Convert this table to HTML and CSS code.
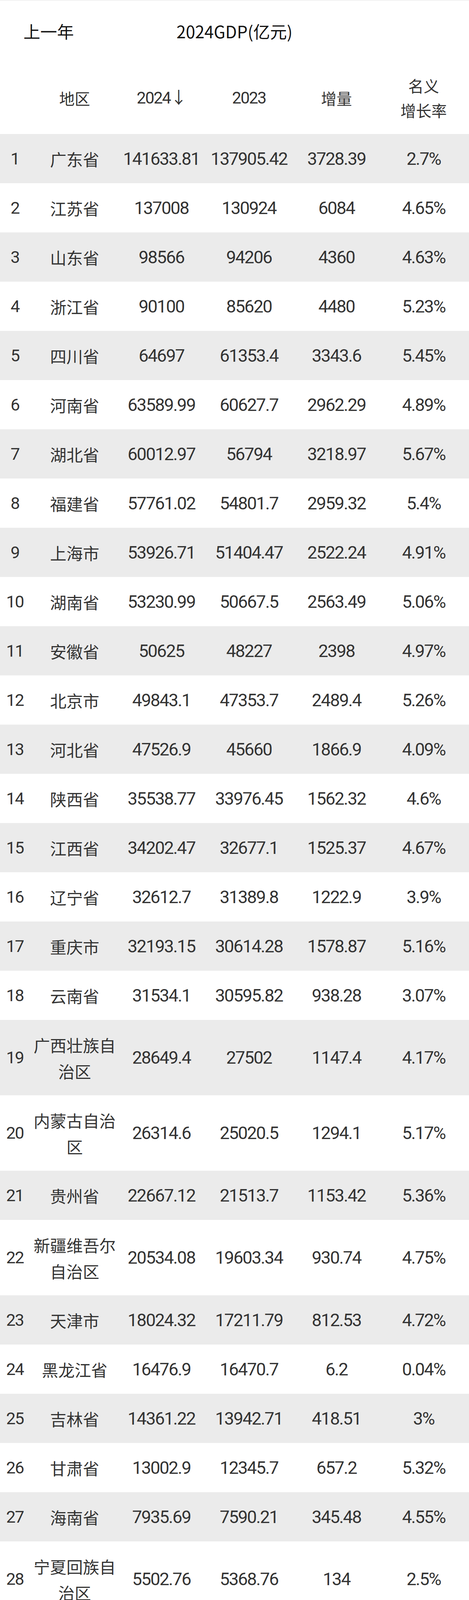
FILE: index.html
```html
<!DOCTYPE html>
<html lang="zh-CN">
<head>
<meta charset="utf-8">
<title>2024GDP(亿元)</title>
<link rel="stylesheet" href="styles.css">
</head>
<body>
<div class="page">
  <div class="titlebar">
    <span class="prev">上一年</span>
    <span class="title">2024GDP(亿元)</span>
    <span class="spacer"></span>
  </div>
  <table class="gdp">
    <colgroup>
      <col class="c-rank"><col class="c-region"><col class="c-a"><col class="c-b"><col class="c-c"><col class="c-d">
    </colgroup>
    <thead>
      <tr>
        <th></th>
        <th class="cjk">地区</th>
        <th class="num">2024↓</th>
        <th class="num">2023</th>
        <th class="cjk">增量</th>
        <th class="cjk">名义<br>增长率</th>
      </tr>
    </thead>
    <tbody>
      <tr><td class="rank">1</td><td class="cjk">广东省</td><td class="num">141633.81</td><td class="num">137905.42</td><td class="num">3728.39</td><td class="num">2.7%</td></tr>
      <tr><td class="rank">2</td><td class="cjk">江苏省</td><td class="num">137008</td><td class="num">130924</td><td class="num">6084</td><td class="num">4.65%</td></tr>
      <tr><td class="rank">3</td><td class="cjk">山东省</td><td class="num">98566</td><td class="num">94206</td><td class="num">4360</td><td class="num">4.63%</td></tr>
      <tr><td class="rank">4</td><td class="cjk">浙江省</td><td class="num">90100</td><td class="num">85620</td><td class="num">4480</td><td class="num">5.23%</td></tr>
      <tr><td class="rank">5</td><td class="cjk">四川省</td><td class="num">64697</td><td class="num">61353.4</td><td class="num">3343.6</td><td class="num">5.45%</td></tr>
      <tr><td class="rank">6</td><td class="cjk">河南省</td><td class="num">63589.99</td><td class="num">60627.7</td><td class="num">2962.29</td><td class="num">4.89%</td></tr>
      <tr><td class="rank">7</td><td class="cjk">湖北省</td><td class="num">60012.97</td><td class="num">56794</td><td class="num">3218.97</td><td class="num">5.67%</td></tr>
      <tr><td class="rank">8</td><td class="cjk">福建省</td><td class="num">57761.02</td><td class="num">54801.7</td><td class="num">2959.32</td><td class="num">5.4%</td></tr>
      <tr><td class="rank">9</td><td class="cjk">上海市</td><td class="num">53926.71</td><td class="num">51404.47</td><td class="num">2522.24</td><td class="num">4.91%</td></tr>
      <tr><td class="rank">10</td><td class="cjk">湖南省</td><td class="num">53230.99</td><td class="num">50667.5</td><td class="num">2563.49</td><td class="num">5.06%</td></tr>
      <tr><td class="rank">11</td><td class="cjk">安徽省</td><td class="num">50625</td><td class="num">48227</td><td class="num">2398</td><td class="num">4.97%</td></tr>
      <tr><td class="rank">12</td><td class="cjk">北京市</td><td class="num">49843.1</td><td class="num">47353.7</td><td class="num">2489.4</td><td class="num">5.26%</td></tr>
      <tr><td class="rank">13</td><td class="cjk">河北省</td><td class="num">47526.9</td><td class="num">45660</td><td class="num">1866.9</td><td class="num">4.09%</td></tr>
      <tr><td class="rank">14</td><td class="cjk">陕西省</td><td class="num">35538.77</td><td class="num">33976.45</td><td class="num">1562.32</td><td class="num">4.6%</td></tr>
      <tr><td class="rank">15</td><td class="cjk">江西省</td><td class="num">34202.47</td><td class="num">32677.1</td><td class="num">1525.37</td><td class="num">4.67%</td></tr>
      <tr><td class="rank">16</td><td class="cjk">辽宁省</td><td class="num">32612.7</td><td class="num">31389.8</td><td class="num">1222.9</td><td class="num">3.9%</td></tr>
      <tr><td class="rank">17</td><td class="cjk">重庆市</td><td class="num">32193.15</td><td class="num">30614.28</td><td class="num">1578.87</td><td class="num">5.16%</td></tr>
      <tr><td class="rank">18</td><td class="cjk">云南省</td><td class="num">31534.1</td><td class="num">30595.82</td><td class="num">938.28</td><td class="num">3.07%</td></tr>
      <tr><td class="rank">19</td><td class="cjk">广西壮族自治区</td><td class="num">28649.4</td><td class="num">27502</td><td class="num">1147.4</td><td class="num">4.17%</td></tr>
      <tr><td class="rank">20</td><td class="cjk">内蒙古自治区</td><td class="num">26314.6</td><td class="num">25020.5</td><td class="num">1294.1</td><td class="num">5.17%</td></tr>
      <tr><td class="rank">21</td><td class="cjk">贵州省</td><td class="num">22667.12</td><td class="num">21513.7</td><td class="num">1153.42</td><td class="num">5.36%</td></tr>
      <tr><td class="rank">22</td><td class="cjk">新疆维吾尔自治区</td><td class="num">20534.08</td><td class="num">19603.34</td><td class="num">930.74</td><td class="num">4.75%</td></tr>
      <tr><td class="rank">23</td><td class="cjk">天津市</td><td class="num">18024.32</td><td class="num">17211.79</td><td class="num">812.53</td><td class="num">4.72%</td></tr>
      <tr><td class="rank">24</td><td class="cjk">黑龙江省</td><td class="num">16476.9</td><td class="num">16470.7</td><td class="num">6.2</td><td class="num">0.04%</td></tr>
      <tr><td class="rank">25</td><td class="cjk">吉林省</td><td class="num">14361.22</td><td class="num">13942.71</td><td class="num">418.51</td><td class="num">3%</td></tr>
      <tr><td class="rank">26</td><td class="cjk">甘肃省</td><td class="num">13002.9</td><td class="num">12345.7</td><td class="num">657.2</td><td class="num">5.32%</td></tr>
      <tr><td class="rank">27</td><td class="cjk">海南省</td><td class="num">7935.69</td><td class="num">7590.21</td><td class="num">345.48</td><td class="num">4.55%</td></tr>
      <tr><td class="rank">28</td><td class="cjk">宁夏回族自治区</td><td class="num">5502.76</td><td class="num">5368.76</td><td class="num">134</td><td class="num">2.5%</td></tr>
      <tr><td class="rank">29</td><td class="cjk">青海省</td><td class="num">3950.8</td><td class="num">3849.19</td><td class="num">101.61</td><td class="num">2.64%</td></tr>
      <tr><td class="rank">30</td><td class="cjk">西藏自治区</td><td class="num">2764.94</td><td class="num">2532.86</td><td class="num">232.08</td><td class="num">9.16%</td></tr>
      <tr class="blank"><td colspan="6"></td></tr>
    </tbody>
  </table>
</div>
</body>
</html>
```

FILE: styles.css
```css
html, body {
  margin: 0;
  padding: 0;
  background: #ffffff;
}

.page {
  width: 1200px;
  font-family: "Noto Sans CJK SC", sans-serif;
  color: #333333;
}

.titlebar {
  box-sizing: border-box;
  height: 157px;
  border-top: 1px solid #e3e3e3;
  display: grid;
  grid-template-columns: 1fr auto 1fr;
  align-items: center;
  color: #111111;
  font-size: 43px;
  line-height: 60px;
}

.prev {
  padding-left: 60px;
  font-family: "Noto Sans CJK SC", sans-serif;
}

.title {
  font-family: "Liberation Sans Narrow", "Noto Sans CJK SC", sans-serif;
}

.gdp {
  width: 1200px;
  border-collapse: collapse;
  table-layout: fixed;
}

.c-rank { width: 76px; }
.c-region { width: 230px; }
.c-a { width: 214px; }
.c-b { width: 234px; }
.c-c { width: 214px; }
.c-d { width: 232px; }

.gdp th {
  font-weight: normal;
  padding: 30px 0;
  line-height: 63px;
  font-size: 39.5px;
  text-align: center;
  vertical-align: middle;
  color: #333333;
}

.gdp th.num {
  font-family: "Roboto", "Noto Sans CJK SC", sans-serif;
  font-size: 42px;
  letter-spacing: -2px;
}

.gdp td {
  padding: 29.5px 0;
  line-height: 67px;
  text-align: center;
  vertical-align: middle;
  color: #333333;
}

.gdp td.cjk {
  font-family: "Noto Sans CJK SC", sans-serif;
  font-size: 42px;
}

.gdp td.num {
  font-family: "Roboto", "Noto Sans CJK SC", sans-serif;
  font-size: 45px;
  letter-spacing: -2px;
}

.gdp td.rank {
  font-family: "Roboto", "Noto Sans CJK SC", sans-serif;
  font-size: 43px;
  letter-spacing: -2px;
}

.gdp tbody tr:nth-child(odd) {
  background: #ebebeb;
}

.gdp tr.blank td {
  padding: 0;
  height: 30px;
  line-height: 0;
}
```
